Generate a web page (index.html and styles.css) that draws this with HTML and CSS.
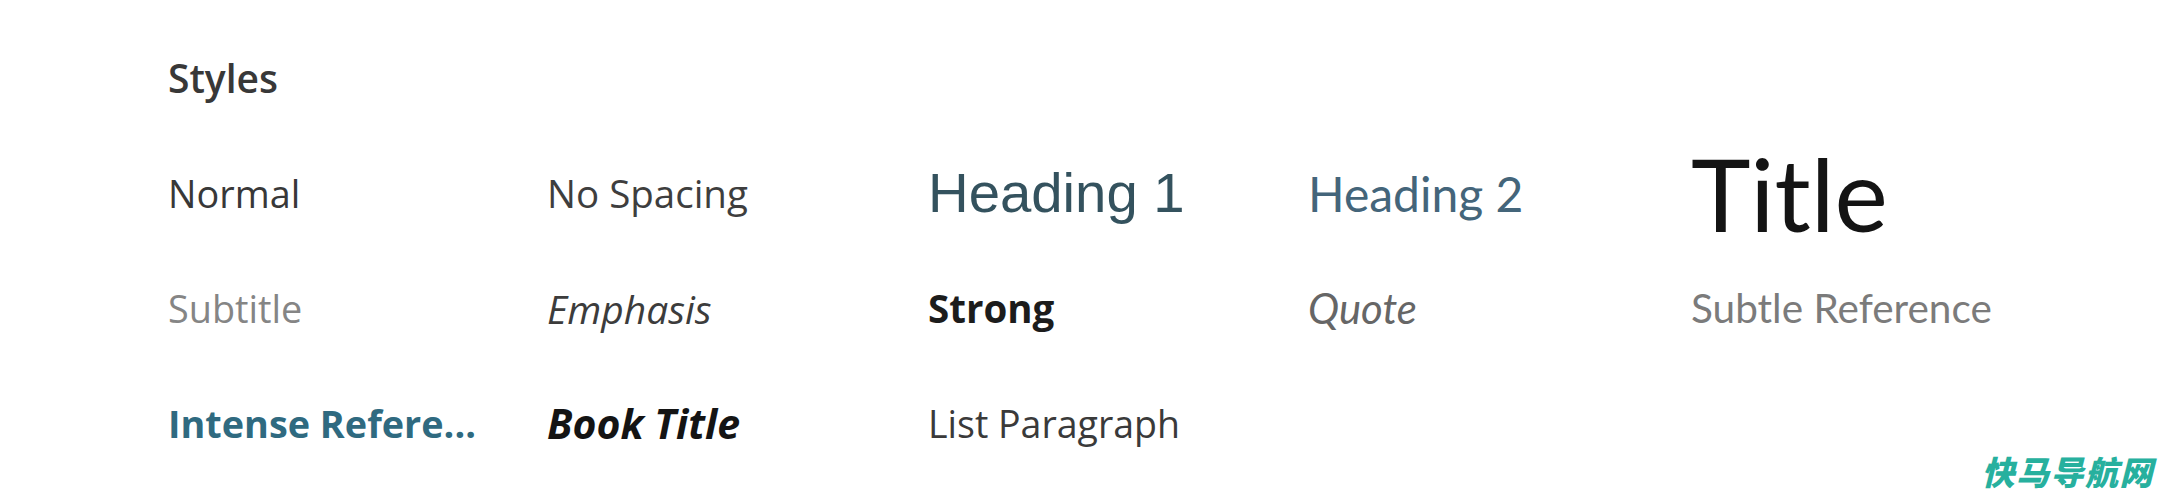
FILE: index.html
```html
<!DOCTYPE html>
<html lang="en">
<head>
<meta charset="utf-8">
<title>Styles</title>
<link rel="stylesheet" href="styles.css">
</head>
<body>
  <section class="panel">
    <h2 class="panel-title">Styles</h2>
    <div class="gallery">
      <div class="style-item s-normal">Normal</div>
      <div class="style-item s-nospacing">No Spacing</div>
      <div class="style-item s-h1">Heading 1</div>
      <div class="style-item s-h2">Heading 2</div>
      <div class="style-item s-title">Title</div>

      <div class="style-item s-subtitle">Subtitle</div>
      <div class="style-item s-emphasis">Emphasis</div>
      <div class="style-item s-strong">Strong</div>
      <div class="style-item s-quote">Quote</div>
      <div class="style-item s-subtle-ref">Subtle Reference</div>

      <div class="style-item s-intense-ref">Intense Refere...</div>
      <div class="style-item s-book-title">Book Title</div>
      <div class="style-item s-list">List Paragraph</div>
    </div>
  </section>
  <div class="site-mark">快马导航网</div>
</body>
</html>
```
FILE: styles.css
```css
html, body {
  margin: 0;
  background: #ffffff;
}

body {
  width: 2182px;
  height: 500px;
  position: relative;
  overflow: hidden;
  font-family: "Open Sans", "Noto Sans", sans-serif;
}

.panel {
  padding: 58px 0 0 168px;
}

.panel-title {
  margin: 0 0 39px;
  font-size: 39px;
  font-weight: 600;
  line-height: 1;
  color: #383838;
}

.gallery {
  display: grid;
  grid-template-columns: 379px 381px 380px 383px 380px;
  grid-auto-rows: 115px;
  align-items: center;
}

.style-item {
  line-height: 1;
  white-space: nowrap;
  font-size: 37px;
  color: #3d3d3d;
}

.s-normal { font-size: 37.8px; color: #383838; }
.s-nospacing { font-size: 38.5px; color: #3e3e3e; }

.s-h1 {
  font-family: "Liberation Sans", Arial, sans-serif;
  font-size: 56.3px;
  color: #34525e;
}

.s-h2 {
  font-family: Lato, sans-serif;
  font-size: 48px;
  color: #44657a;
}

.s-title {
  font-family: Lato, sans-serif;
  font-weight: 400;
  font-size: 101px;
  color: #141414;
}

.s-subtitle { font-size: 37.8px; color: #858585; }
.s-emphasis { font-style: italic; font-size: 39px; color: #3c3c3c; }
.s-strong { font-weight: 700; font-size: 38.5px; color: #1c1c1c; }

.s-quote {
  font-family: Lato, sans-serif;
  font-style: italic;
  font-size: 41.8px;
  color: #666666;
}

.s-subtle-ref {
  font-family: Lato, sans-serif;
  font-size: 40.5px;
  color: #7b7b7b;
}

.s-intense-ref { font-weight: 700; font-size: 37.8px; color: #2f6a80; }
.s-book-title { font-weight: 700; font-style: italic; font-size: 41px; color: #141414; }
.s-list { font-size: 37.5px; color: #3a3a3a; }

/* site watermark in the lower right corner */
.site-mark {
  position: absolute;
  right: 28px;
  bottom: 12px;
  font-family: "Noto Sans CJK SC", sans-serif;
  font-weight: 900;
  font-style: italic;
  font-size: 33px;
  line-height: 1;
  letter-spacing: 1.5px;
  color: #27b09e;
}
```
